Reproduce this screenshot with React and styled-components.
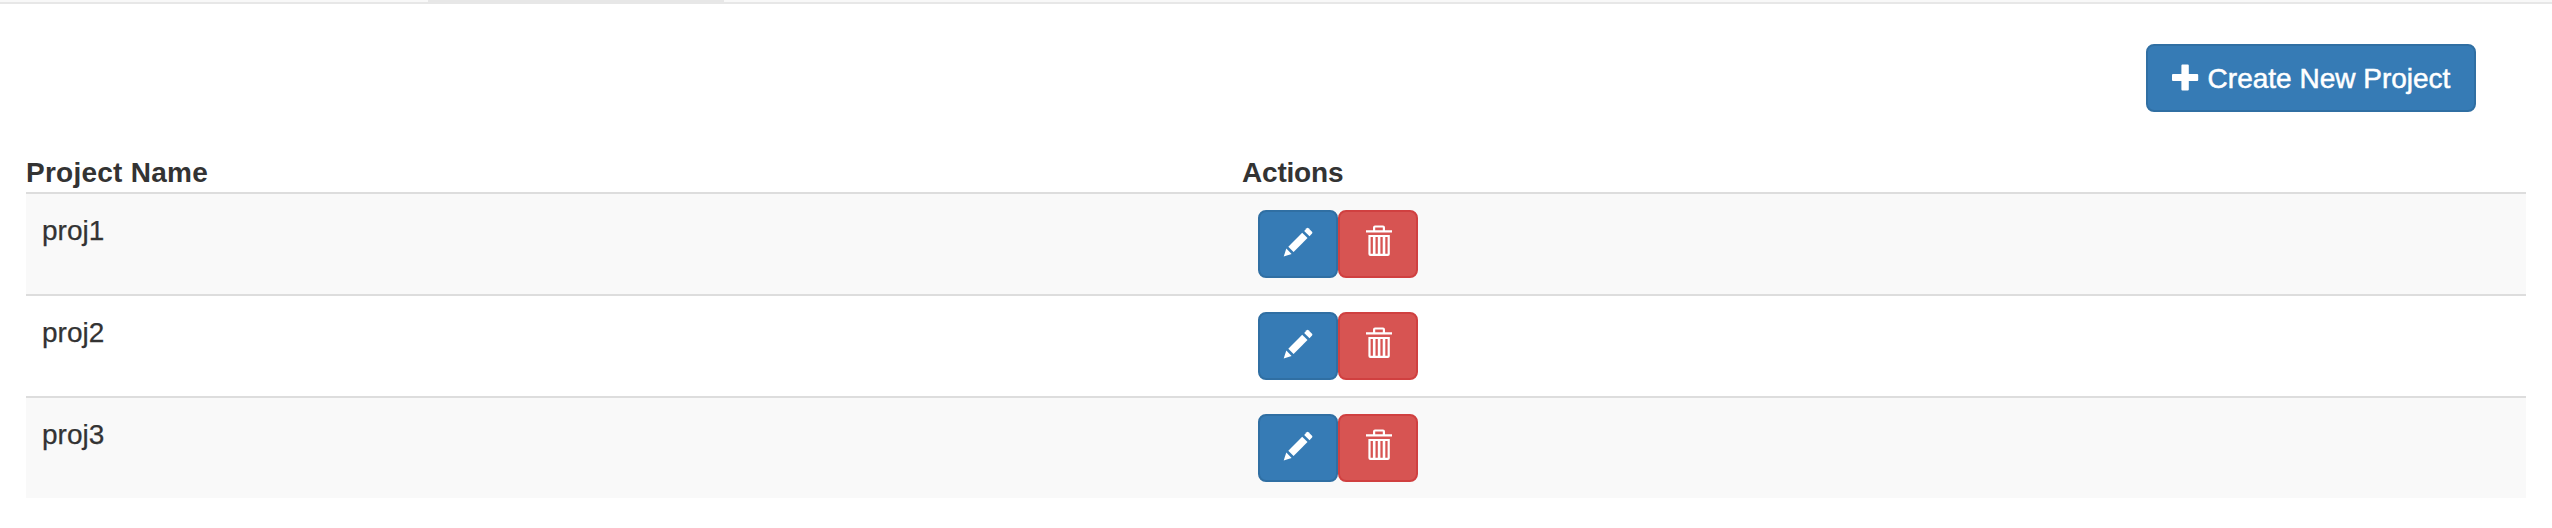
import React from "react";
import styled, { createGlobalStyle, css } from "styled-components";

const GlobalStyle = createGlobalStyle`
  *, *::before, *::after { box-sizing: border-box; }
  body {
    margin: 0;
    background: #fff;
    color: #333;
    font-family: "Helvetica Neue", "Liberation Sans", Arial, sans-serif;
    font-size: 28px;
    line-height: 40px;
  }
`;

const Navbar = styled.nav`
  height: 4px;
  padding-left: 428px;
  background: #f8f8f8;
  border-bottom: 2px solid #e7e7e7;
`;

const ActiveTab = styled.div`
  width: 296px;
  height: 2px;
  background: #e7e7e7;
`;

const Toolbar = styled.div`
  display: flex;
  justify-content: flex-end;
  padding: 40px 76px;
  height: 148px;
`;

const tones = {
  primary: css`
    background: #367bb5;
    border-color: #306fa3;
  `,
  danger: css`
    background: #d75452;
    border-color: #d04040;
  `,
};

const Button = styled.button`
  display: flex;
  align-items: center;
  justify-content: center;
  width: ${(p) => p.$width}px;
  height: 68px;
  padding: 0;
  border: 2px solid;
  border-radius: 8px;
  color: #fff;
  font: inherit;
  cursor: pointer;
  ${(p) => tones[p.$tone]}
`;

const ButtonLabel = styled.span`
  margin-left: 8px;
  padding-top: 2px;
  white-space: nowrap;
  -webkit-text-stroke: 0.5px #fff;
`;

const Icon = styled.svg`
  display: block;
  flex: none;
  width: 28px;
  height: 32px;
  fill: currentColor;
`;

const ActionIcon = styled(Icon)`
  margin-top: -6px;
  margin-left: ${(p) => p.$shift || 0}px;
  overflow: visible;
`;

const Table = styled.table`
  width: 2500px;
  margin-left: 26px;
  border-collapse: separate;
  border-spacing: 0;
  table-layout: fixed;
`;

const HeadCell = styled.th`
  width: ${(p) => p.$width}px;
  height: 40px;
  padding: 2px 0 0;
  line-height: 38px;
  text-align: left;
  font-weight: bold;
  letter-spacing: ${(p) => p.$tracking}px;
`;

const Row = styled.tr`
  height: 102px;
  &:nth-child(odd) { background: #f9f9f9; }
`;

const Cell = styled.td`
  padding: 16px;
  border-top: 2px solid #ddd;
  vertical-align: top;
`;

const ProjectName = styled.div`
  padding-top: 1px;
  -webkit-text-stroke: 0.25px #333;
`;

const Actions = styled.div`
  display: flex;
`;

const PlusIcon = () => (
  <Icon viewBox="0 0 28 32">
    <path d="M10.4 2.5h5.4a1 1 0 0 1 1 1v8.4h8.4a1 1 0 0 1 1 1v5.2a1 1 0 0 1-1 1h-8.4v8.4a1 1 0 0 1-1 1h-5.4a1 1 0 0 1-1-1v-8.4H1a1 1 0 0 1-1-1v-5.2a1 1 0 0 1 1-1h8.4V3.5a1 1 0 0 1 1-1z" />
  </Icon>
);

const PencilIcon = () => (
  <ActionIcon viewBox="0 0 28 32">
    <path d="M-.3 31.6 2.3 23.6 7.6 29z" />
    <path d="M4.3 21.7 18.2 7.8 23.5 13.1 9.6 27z" />
    <path d="M20.2 5.9 22.7 3.3a1.3 1.3 0 0 1 1.8 0l3.5 3.5a1.3 1.3 0 0 1 0 1.8l-2.5 2.6z" />
  </ActionIcon>
);

const TrashIcon = () => (
  <ActionIcon viewBox="0 0 28 32" $shift={4}>
    <path
      fillRule="evenodd"
      d="M7 5.2V2.4a2 2 0 0 1 2-2h8a2 2 0 0 1 2 2v2.8h7v2.4H0V5.2zM9.2 5.2h7.6V2.6H9.2z"
    />
    <path
      fillRule="evenodd"
      d="M2.4 10h21.4v19a2 2 0 0 1-2 2H4.4a2 2 0 0 1-2-2zM4.6 12.1v16.6h2.3V12.1zM9.5 12.1v16.6h2.3V12.1zM14.4 12.1v16.6h2.3V12.1zM19.3 12.1v16.6h2.3V12.1z"
    />
  </ActionIcon>
);

const projects = ["proj1", "proj2", "proj3"];

export default function App() {
  return (
    <>
      <GlobalStyle />
      <Navbar>
        <ActiveTab />
      </Navbar>
      <Toolbar>
        <Button $tone="primary" $width={330}>
          <PlusIcon />
          <ButtonLabel>Create New Project</ButtonLabel>
        </Button>
      </Toolbar>
      <Table>
        <thead>
          <tr>
            <HeadCell $width={1216} $tracking={0.25}>Project Name</HeadCell>
            <HeadCell $width={1284} $tracking={-0.2}>Actions</HeadCell>
          </tr>
        </thead>
        <tbody>
          {projects.map((name) => (
            <Row key={name}>
              <Cell>
                <ProjectName>{name}</ProjectName>
              </Cell>
              <Cell>
                <Actions>
                  <Button $tone="primary" $width={80} aria-label="Edit">
                    <PencilIcon />
                  </Button>
                  <Button $tone="danger" $width={80} aria-label="Delete">
                    <TrashIcon />
                  </Button>
                </Actions>
              </Cell>
            </Row>
          ))}
        </tbody>
      </Table>
    </>
  );
}
